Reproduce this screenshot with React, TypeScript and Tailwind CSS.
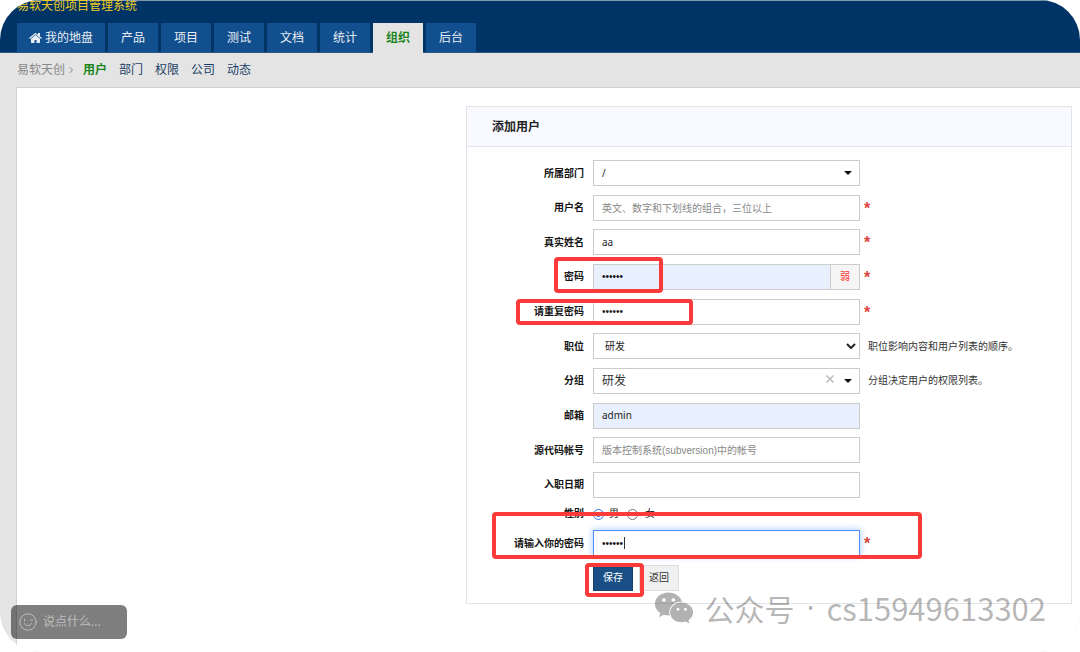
import React from 'react';
import { FaWeixin } from 'react-icons/fa';

const tabs = ['产品', '项目', '测试', '文档', '统计', '组织', '后台'];
const subLinks = ['用户', '部门', '权限', '公司', '动态'];

const inputBase =
  'block w-full h-[26px] px-2 text-[10px] text-[#222] bg-white border border-[#ccc] rounded-none outline-none placeholder:text-[#888]';

function Mark({ className }: { className: string }) {
  return (
    <div
      aria-hidden="true"
      className={`absolute z-10 border-4 border-[#fc3a3a] rounded-sm pointer-events-none ${className}`}
    />
  );
}

function Caret() {
  return (
    <svg viewBox="0 0 8 4" className="absolute right-2 top-[11px] w-2 h-1 pointer-events-none">
      <path d="M0 0h8L4 4z" fill="#111" />
    </svg>
  );
}

function HomeIcon() {
  return (
    <svg viewBox="0 128 1664 1536" className="w-[13px] h-3" fill="currentColor">
      <path d="M1408 992v480q0 26-19 45t-45 19H960v-384H704v384H320q-26 0-45-19t-19-45V992q0-1 .5-3t.5-3l575-474 575 474q1 2 1 6zm223-69l-62 74q-8 9-21 11h-3q-13 0-21-7L832 424 140 1001q-12 8-24 7-13-2-21-11l-62-74q-8-10-7-23.5t11-21.5l719-599q32-26 76-26t76 26l244 204V288q0-14 9-23t23-9h192q14 0 23 9t9 23v408l219 182q10 8 11 21.5t-7 23.5z" />
    </svg>
  );
}

type RowProps = {
  id: string;
  label: string;
  required?: boolean;
  note?: string;
  mark?: string;
  children: React.ReactNode;
};

function Row({ id, label, required, note, mark, children }: RowProps) {
  return (
    <div className="relative flex items-center h-[26px]">
      <label htmlFor={id} className="w-[117px] shrink-0 text-right font-bold">
        {label}
      </label>
      <div className="relative flex w-[267px] ml-[9px]">{children}</div>
      {required && (
        <span className="ml-1 pt-0.5 text-base leading-5 font-bold text-[#d9453d] font-['Liberation_Sans',sans-serif]">*</span>
      )}
      {note && <span className="ml-2 text-[#333]">{note}</span>}
      {mark && <Mark className={mark} />}
    </div>
  );
}

function Header() {
  return (
    <header className="h-[53px] bg-[#003366] border-t border-[#7f99b2]">
      <h1 className="h-[22px] pl-[17px] text-xs leading-[10px] text-[#f0cd1e]">易软天创项目管理系统</h1>
      <nav className="flex gap-[3px] pl-[17px] border-b border-[#2a5482] text-xs">
        <a href="#my" className="flex items-center justify-center gap-[3px] w-[88px] h-[29px] bg-[#114f8e] text-[#e9eef4]">
          <HomeIcon />
          我的地盘
        </a>
        {tabs.map((tab) => (
          <a
            key={tab}
            href={`#${tab}`}
            className={
              tab === '组织'
                ? 'flex items-center justify-center w-[50px] h-[30px] pb-px -mb-px bg-[#e4e4e4] text-[#1c861c] font-bold'
                : 'flex items-center justify-center w-[50px] h-[29px] bg-[#114f8e] text-[#e9eef4]'
            }
          >
            {tab}
          </a>
        ))}
      </nav>
    </header>
  );
}

function SubNav() {
  return (
    <nav className="flex items-center h-[34px] pl-[17px] text-xs text-[#114f8e]">
      <a href="#company" className="text-[#888]">易软天创</a>
      <svg viewBox="0 0 4 8" className="w-1 h-2 ml-1 mr-2.5" fill="none" stroke="#888">
        <path d="M0.5 1l3 3-3 3" />
      </svg>
      <div className="flex gap-3">
        {subLinks.map((link) => (
          <a
            key={link}
            href={`#${link}`}
            className={link === '用户' ? 'text-[#1c861c] font-bold' : 'text-[#1a3f66]'}
          >
            {link}
          </a>
        ))}
      </div>
    </nav>
  );
}

function UserForm() {
  return (
    <section className="w-full max-w-[606px] border border-[#e2e4e8] bg-white">
      <h2 className="flex items-center h-10 pl-[25px] text-xs font-bold text-[#222] bg-[#f9faff] border-b border-[#e2e4e8]">
        添加用户
      </h2>
      <form className="pt-[13px] pb-3 text-[10px] text-[#141414]">
        <div className="flex flex-col justify-between min-h-[338px]">
          <Row id="dept" label="所属部门">
            <select id="dept" className={`${inputBase} appearance-none`}>
              <option>/</option>
            </select>
            <Caret />
          </Row>
          <Row id="account" label="用户名" required>
            <input id="account" type="text" placeholder="英文、数字和下划线的组合，三位以上" className={inputBase} />
          </Row>
          <Row id="realname" label="真实姓名" required>
            <input id="realname" type="text" defaultValue="aa" className={inputBase} />
          </Row>
          <Row id="password1" label="密码" required mark="left-[87px] -top-[7px] w-[109px] h-9">
            <input
              id="password1"
              type="password"
              defaultValue="123456"
              className="block flex-1 min-w-0 h-[26px] px-2 text-[10px] bg-[#e8f0fe] border border-[#ccc] outline-none font-['Liberation_Sans',sans-serif]"
            />
            <span className="flex items-center justify-center w-[29px] h-[26px] border border-l-0 border-[#ccc] bg-[#f5f5f5] text-[#ff3030]">
              弱
            </span>
          </Row>
          <Row id="password2" label="请重复密码" required mark="left-[49px] top-0 w-[177px] h-[26px]">
            <input id="password2" type="password" defaultValue="123456" className={`${inputBase} font-['Liberation_Sans',sans-serif]`} />
          </Row>
          <Row id="role" label="职位" note="职位影响内容和用户列表的顺序。">
            <select id="role" className={`${inputBase} appearance-none indent-[3px]`}>
              <option>研发</option>
            </select>
            <svg viewBox="0 0 10 6" className="absolute right-1 top-2.5 w-2.5 h-1.5 pointer-events-none" fill="none" stroke="#222" strokeWidth="2">
              <path d="M1 1l4 4 4-4" />
            </svg>
          </Row>
          <Row id="group" label="分组" note="分组决定用户的权限列表。">
            <select
              id="group"
              className="block w-full h-[26px] px-2 text-xs text-[#333] bg-white border border-[#ccc] rounded-none outline-none appearance-none"
            >
              <option>研发</option>
            </select>
            <button type="button" aria-label="清除" className="absolute right-[26px] top-[7px] w-2 h-2">
              <svg viewBox="0 0 8 8" className="block w-2 h-2" stroke="#bbb" strokeWidth="1.5">
                <path d="M0.5 0.5l7 7M7.5 0.5l-7 7" />
              </svg>
            </button>
            <Caret />
          </Row>
          <Row id="email" label="邮箱">
            <input
              id="email"
              type="text"
              defaultValue="admin"
              className="block w-full h-[26px] px-2 pb-0.5 text-[10px] text-[#222] bg-[#e8f0fe] border border-[#ccc] outline-none"
            />
          </Row>
          <Row id="commiter" label="源代码帐号">
            <input
              id="commiter"
              type="text"
              placeholder="版本控制系统(subversion)中的帐号"
              className={`${inputBase} font-['Liberation_Sans','Noto_Sans_CJK_SC',sans-serif]`}
            />
          </Row>
          <Row id="join" label="入职日期">
            <input id="join" type="text" className={inputBase} />
          </Row>
        </div>

        <div role="radiogroup" aria-labelledby="gender" className="flex items-center h-8 pb-0.5">
          <span id="gender" className="w-[117px] mr-[9px] text-right font-bold">性别</span>
          <label className="flex items-center gap-[5px] mr-2">
            <input
              type="radio"
              name="gender"
              defaultChecked
              className="appearance-none w-[11px] h-[11px] mt-0.5 rounded-full border border-[#2f7bea] checked:bg-[#2f7bea] bg-clip-content p-0.5"
            />
            男
          </label>
          <label className="flex items-center gap-[7px]">
            <input
              type="radio"
              name="gender"
              className="appearance-none w-[11px] h-[11px] mt-0.5 rounded-full border border-[#777] checked:bg-[#2f7bea] bg-clip-content p-0.5"
            />
            女
          </label>
        </div>

        <Row id="verify" label="请输入你的密码" required mark="left-[25px] -top-[18px] w-[430px] h-[47px]">
          <input
            id="verify"
            type="password"
            defaultValue="123456"
            className="block w-full h-[26px] px-2 text-[10px] bg-white border border-[#4d90fe] shadow-[0_0_6px_1px_rgba(77,144,254,0.4)] outline-none font-['Liberation_Sans',sans-serif]"
          />
          <span className="absolute left-[31px] top-[7px] w-px h-3 bg-[#333] pointer-events-none" />
        </Row>

        <div className="relative flex gap-1.5 mt-[9px] ml-[126px]">
          <button type="submit" className="w-10 h-[26px] pb-0.5 bg-[#1a4f85] border border-[#164270] text-white">
            保存
          </button>
          <button type="button" className="w-10 h-[26px] pb-0.5 bg-[#f0f0f0] border border-[#ddd] text-[#333]">
            返回
          </button>
          <Mark className="-left-2 -top-0.5 w-[59px] h-[34px]" />
        </div>
      </form>
    </section>
  );
}

export default function App() {
  return (
    <div className="bg-white font-['Noto_Sans','Noto_Sans_CJK_SC',sans-serif]" lang="zh-CN">
      <div className="relative flex flex-col min-h-screen overflow-hidden rounded-[40px] bg-[#e4e4e4]">
        <Header />
        <SubNav />
        <main className="flex flex-1 items-start justify-end ml-4 pt-[18px] pr-2 border-t border-l border-[#d0d0d0] bg-white">
          <UserForm />
        </main>

        {/* Comment box */}
        <button
          type="button"
          className="absolute left-[11px] bottom-[13px] flex items-center gap-1.5 w-[116px] h-[34px] pl-2 rounded-md bg-black/50 text-xs text-[#bdbdbd]"
        >
          <svg viewBox="0 0 18 18" className="w-[18px] h-[18px]" fill="none" stroke="#bdbdbd" strokeLinecap="round">
            <circle cx="9" cy="9" r="8.2" />
            <path d="M5.5 6v2M11.5 7h2M5.5 10.5c.5 3 6 3 7-.2" />
          </svg>
          说点什么...
        </button>

        {/* Account watermark */}
        <div className="absolute right-[34px] bottom-6 z-20 flex items-center h-10 text-black/30 whitespace-nowrap pointer-events-none font-['Noto_Sans_CJK_SC',sans-serif]">
          <FaWeixin className="w-10 h-9 mr-2.5" />
          <span className="text-3xl">公众号</span>
          <span className="w-8 text-center text-3xl font-['Noto_Sans',sans-serif]">·</span>
          <span className="text-[31px]">cs15949613302</span>
        </div>
      </div>
    </div>
  );
}
